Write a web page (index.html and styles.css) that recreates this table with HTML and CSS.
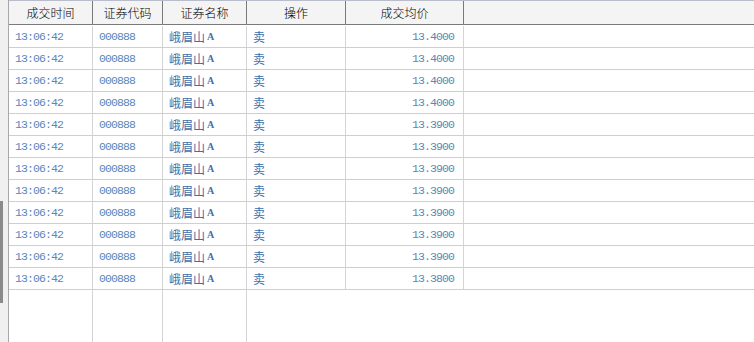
FILE: index.html
```html
<!DOCTYPE html>
<html lang="zh">
<head>
<meta charset="utf-8">
<link rel="stylesheet" href="styles.css">
</head>
<body>
<div class="screen">
  <div class="gutter"><div class="thumb"></div></div>
  <div class="grid">
    <div class="row head">
      <div class="c c1">成交时间</div>
      <div class="c c2">证券代码</div>
      <div class="c c3">证券名称</div>
      <div class="c c4">操作</div>
      <div class="c c5">成交均价</div>
      <div class="c c6"></div>
    </div>
    <div class="row"><div class="c c1 num">13:06:42</div><div class="c c2 num">000888</div><div class="c c3 name">峨眉山<span class="a">A</span></div><div class="c c4 name">卖</div><div class="c c5 num r">13.4000</div><div class="c c6"></div></div>
    <div class="row"><div class="c c1 num">13:06:42</div><div class="c c2 num">000888</div><div class="c c3 name">峨眉山<span class="a">A</span></div><div class="c c4 name">卖</div><div class="c c5 num r">13.4000</div><div class="c c6"></div></div>
    <div class="row"><div class="c c1 num">13:06:42</div><div class="c c2 num">000888</div><div class="c c3 name">峨眉山<span class="a">A</span></div><div class="c c4 name">卖</div><div class="c c5 num r">13.4000</div><div class="c c6"></div></div>
    <div class="row"><div class="c c1 num">13:06:42</div><div class="c c2 num">000888</div><div class="c c3 name">峨眉山<span class="a">A</span></div><div class="c c4 name">卖</div><div class="c c5 num r">13.4000</div><div class="c c6"></div></div>
    <div class="row"><div class="c c1 num">13:06:42</div><div class="c c2 num">000888</div><div class="c c3 name">峨眉山<span class="a">A</span></div><div class="c c4 name">卖</div><div class="c c5 num r">13.3900</div><div class="c c6"></div></div>
    <div class="row"><div class="c c1 num">13:06:42</div><div class="c c2 num">000888</div><div class="c c3 name">峨眉山<span class="a">A</span></div><div class="c c4 name">卖</div><div class="c c5 num r">13.3900</div><div class="c c6"></div></div>
    <div class="row"><div class="c c1 num">13:06:42</div><div class="c c2 num">000888</div><div class="c c3 name">峨眉山<span class="a">A</span></div><div class="c c4 name">卖</div><div class="c c5 num r">13.3900</div><div class="c c6"></div></div>
    <div class="row"><div class="c c1 num">13:06:42</div><div class="c c2 num">000888</div><div class="c c3 name">峨眉山<span class="a">A</span></div><div class="c c4 name">卖</div><div class="c c5 num r">13.3900</div><div class="c c6"></div></div>
    <div class="row"><div class="c c1 num">13:06:42</div><div class="c c2 num">000888</div><div class="c c3 name">峨眉山<span class="a">A</span></div><div class="c c4 name">卖</div><div class="c c5 num r">13.3900</div><div class="c c6"></div></div>
    <div class="row"><div class="c c1 num">13:06:42</div><div class="c c2 num">000888</div><div class="c c3 name">峨眉山<span class="a">A</span></div><div class="c c4 name">卖</div><div class="c c5 num r">13.3900</div><div class="c c6"></div></div>
    <div class="row"><div class="c c1 num">13:06:42</div><div class="c c2 num">000888</div><div class="c c3 name">峨眉山<span class="a">A</span></div><div class="c c4 name">卖</div><div class="c c5 num r">13.3900</div><div class="c c6"></div></div>
    <div class="row"><div class="c c1 num">13:06:42</div><div class="c c2 num">000888</div><div class="c c3 name">峨眉山<span class="a">A</span></div><div class="c c4 name">卖</div><div class="c c5 num r">13.3800</div><div class="c c6"></div></div>
    <div class="row filler">
      <div class="c c1"></div><div class="c c2"></div><div class="c c3"></div><div class="c c4 blank"></div><div class="c c5 blank"></div><div class="c c6"></div>
    </div>
  </div>
</div>
</body>
</html>
```

FILE: styles.css
```css
html, body {
  margin: 0;
  padding: 0;
  background: #ffffff;
  overflow: hidden;
}
.screen {
  display: flex;
  width: 754px;
  height: 342px;
  font-family: "Noto Sans CJK SC", "Liberation Sans", sans-serif;
  font-size: 12px;
}
.gutter {
  width: 8px;
  flex: none;
  background: #f0f0f0;
  border-right: 1px solid #a8a8a8;
  position: relative;
}
.thumb {
  position: absolute;
  left: 0;
  top: 201px;
  width: 3px;
  height: 102px;
  background: #8a8a8a;
}
.grid {
  flex: 1;
  display: flex;
  flex-direction: column;
}
.row {
  display: grid;
  grid-template-columns: 84px 70px 84px 99px 118px 1fr;
  height: 22px;
  border-bottom: 1px solid #cfcfcf;
  box-sizing: border-box;
  flex: none;
}
.row.head {
  height: 25px;
  background: #f4f4f4;
  border-top: 1px solid #b9bccb;
  border-bottom: 1px solid #7a7a7a;
  margin-bottom: 1px;
}
.row.head .c {
  justify-content: center;
  border-right-color: #7a7a7a;
  padding: 0;
  font-size: 12px;
  font-weight: 300;
  color: #000;
}
.c {
  display: flex;
  align-items: center;
  border-right: 1px solid #d4d4d4;
  padding-left: 6px;
  overflow: hidden;
  white-space: nowrap;
  color: #3a6fa6;
}
.c6 { border-right: none; }
.num {
  font-family: "Liberation Mono", "DejaVu Sans Mono", monospace;
  font-size: 11.5px;
  letter-spacing: -0.9px;
  color: #5787b8;
}
.r {
  justify-content: flex-end;
  padding-right: 9px;
}
.name {
  color: #3d70aa;
  font-size: 12px;
  font-weight: 400;
}
.a {
  font-family: "Liberation Serif", serif;
  font-weight: bold;
  font-size: 10px;
  margin-left: 2px;
}
.row.filler {
  flex: 1;
  border-bottom: none;
}
.filler .blank { border-right: none; }
.filler .c4 { border-right: none; }
```
